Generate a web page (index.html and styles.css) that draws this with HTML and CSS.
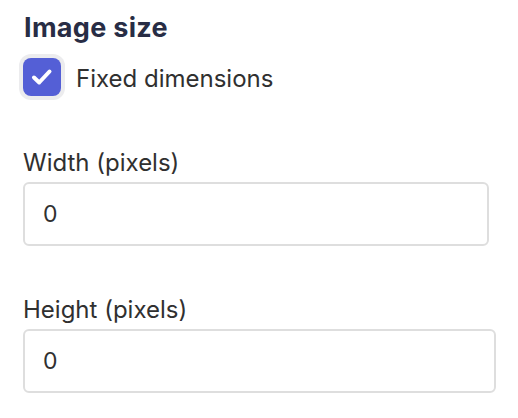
FILE: index.html
```html
<!DOCTYPE html>
<html>
<head>
<meta charset="utf-8">
<link rel="stylesheet" href="styles.css">
</head>
<body>
<div class="panel">
  <h2 class="title">Image size</h2>
  <label class="check-row">
    <span class="check-ring">
      <span class="check-box">
        <svg viewBox="0 0 38 38" width="38" height="38"><path d="M11 19.5 L16.2 24.5 L26.5 13.5" fill="none" stroke="#fff" stroke-width="4" stroke-linecap="round" stroke-linejoin="round"/></svg>
      </span>
    </span>
    <span class="check-label">Fixed dimensions</span>
  </label>
  <div class="field">
    <div class="field-label">Width (pixels)</div>
    <input class="text-input w1" type="text" value="0">
  </div>
  <div class="field">
    <div class="field-label">Height (pixels)</div>
    <input class="text-input w2" type="text" value="0">
  </div>
</div>
</body>
</html>
```
FILE: styles.css
```css
html, body {
  margin: 0;
  padding: 0;
  background: #ffffff;
}
body {
  font-family: Inter, "Noto Sans", sans-serif;
}
.panel {
  padding: 11px 0 0 23px;
}
.title {
  margin: 0 0 0 1px;
  font-size: 27px;
  line-height: 33px;
  font-weight: 700;
  color: #282d45;
  letter-spacing: 0.3px;
}
.check-row {
  display: flex;
  align-items: center;
  margin-top: 10px;
  margin-left: -4px;
}
.check-ring {
  display: flex;
  padding: 4px;
  border-radius: 12px;
  background: #ececee;
}
.check-box {
  display: flex;
  width: 38px;
  height: 38px;
  border-radius: 8px;
  background: #545fd6;
}
.check-label {
  margin-left: 11px;
  padding-top: 2px;
  font-size: 24px;
  line-height: 29px;
  color: #303030;
}
.field {
  margin-top: 49px;
}
.field + .field {
  margin-top: 50px;
}
.field-label {
  font-size: 24px;
  line-height: 28px;
  color: #303030;
  margin-bottom: 5px;
}
.text-input {
  display: block;
  box-sizing: border-box;
  height: 64px;
  margin: 0;
  padding: 0 18px;
  border: 2px solid #dedede;
  border-radius: 6px;
  font-family: Inter, "Noto Sans", sans-serif;
  font-size: 23px;
  color: #303030;
  background: #fff;
  outline: none;
}
.w1 { width: 466px; }
.w2 { width: 473px; }
```
